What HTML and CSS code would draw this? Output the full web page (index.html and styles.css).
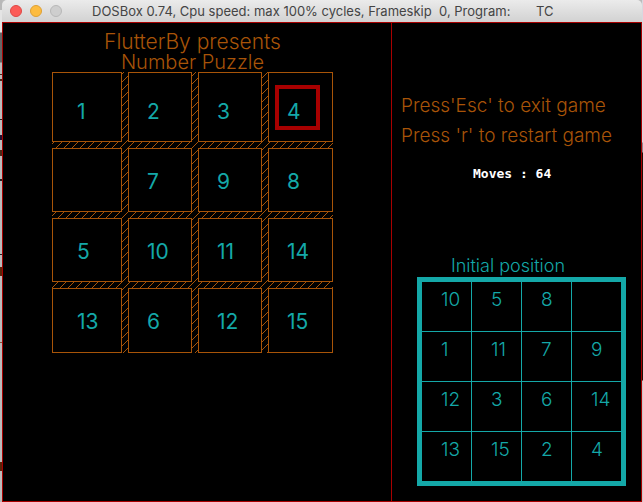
FILE: index.html
```html
<!DOCTYPE html>
<html lang="en">
<head>
<meta charset="utf-8">
<title>Number Puzzle</title>
<link rel="stylesheet" href="styles.css">
</head>
<body>
<div class="window">
  <header class="titlebar">
    <div class="lights">
      <button class="light close" aria-label="Close"></button>
      <button class="light minimize" aria-label="Minimize"></button>
      <button class="light zoom" aria-label="Zoom" disabled></button>
    </div>
    <span class="caption">DOSBox 0.74, Cpu speed: max 100% cycles, Frameskip  0, Program:       TC</span>
  </header>
  <main class="game">
    <section class="play">
      <header class="heading">
        <p class="presenter">FlutterBy presents</p>
        <h1 class="name">Number Puzzle</h1>
      </header>
      <div class="board">
        <div class="tile">1</div><div class="tile">2</div><div class="tile">3</div><div class="tile selected">4</div>
        <div class="tile"></div><div class="tile">7</div><div class="tile">9</div><div class="tile">8</div>
        <div class="tile">5</div><div class="tile">10</div><div class="tile">11</div><div class="tile">14</div>
        <div class="tile">13</div><div class="tile">6</div><div class="tile">12</div><div class="tile">15</div>
      </div>
    </section>
    <aside class="info">
      <p class="hint">Press'Esc' to exit game</p>
      <p class="hint">Press 'r' to restart game</p>
      <p class="moves">Moves : 64</p>
      <table class="initial">
        <caption>Initial position</caption>
        <tbody>
          <tr><td>10</td><td>5</td><td>8</td><td></td></tr>
          <tr><td>1</td><td>11</td><td>7</td><td>9</td></tr>
          <tr><td>12</td><td>3</td><td>6</td><td>14</td></tr>
          <tr><td>13</td><td>15</td><td>2</td><td>4</td></tr>
        </tbody>
      </table>
    </aside>
  </main>
</div>
</body>
</html>
```
FILE: styles.css
```css
:root {
  --orange: #a85408;
  --teal: #14a8a8;
  --red: #a80000;
}

*, *::after { box-sizing: border-box; }

body {
  margin: 0;
  font-family: Inter, "Liberation Sans", sans-serif;
  background:
    linear-gradient(#b8b8b8 10px, #e4e4e4 10px 32px, #666 33px 62px, #bbb 63px 74px, #4a2a18 74px 75px, #bbb 75px 79px, #4a2a18 79px 81px, #bbb 81px 119px, #222 119px 120px, #bbb 120px 135px, #201030 135px 140px, #bbb 140px 150px, #4a2a18 150px 156px, #bbb 156px 179px, #222 179px 181px, #bbb 181px 254px, #222 254px 255px, #bbb 255px 267px, #5a2408 267px 276px, #bbb 276px 342px, #86503a 342px 343px, #bbb 343px 462px, #5a2408 462px 471px, #bbb 471px) left / 2px 100% no-repeat,
    linear-gradient(#d8d8e0 142px, #888890 143px 152px, #181008 153px 380px, #c8c8cc 381px) right / 1px 100% no-repeat,
    #bbb;
}

.window {
  margin: 0 1px 0 2px;
  min-height: 100vh;
  display: flex;
  flex-direction: column;
}

.titlebar {
  display: flex;
  align-items: center;
  gap: 30px;
  height: 22px;
  padding-left: 8px;
  border-radius: 5px 5px 0 0;
  background: linear-gradient(#ebebeb, #d2d2d2);
}

.lights { display: flex; gap: 8px; }

.light {
  width: 12px;
  height: 12px;
  padding: 0;
  border: 1px solid;
  border-radius: 50%;
}
.close { background: #fc5b57; border-color: #df4744; }
.minimize { background: #fdbc40; border-color: #dea034; }
.zoom { background: #cecece; border-color: #b8b8b8; }

.caption {
  font-size: 13px;
  line-height: 22px;
  white-space: pre;
  color: #444;
}

.game {
  flex: 1;
  display: grid;
  grid-template-columns: 388fr 250fr;
  border: 1px solid var(--red);
  background: #000;
}

.play { padding: 9px 0 0 49px; }

.heading {
  width: 281px;
  text-align: center;
  color: var(--orange);
}
.presenter,
.name {
  margin: 0;
  font-size: 21px;
  font-weight: 300;
  line-height: 20px;
}
.name { font-size: 20px; }

.board {
  display: grid;
  grid-template-columns: 70px 64px 64px 65px;
  grid-template-rows: 70px 64px 64px 65px;
  gap: 6px;
  width: 281px;
  background: linear-gradient(135deg, transparent 46%, var(--orange) 46% 54%, transparent 54%) 0 0 / 8px 8px;
}

.tile {
  position: relative;
  padding: 19px 0 0 18px;
  border: 1px solid var(--orange);
  background: #000;
  font-size: 21px;
  line-height: 28px;
  color: var(--teal);
}
.tile:nth-child(4n + 1) { padding-left: 24px; }
.tile:nth-child(-n + 4) { padding-top: 25px; }

.selected::after {
  content: "";
  position: absolute;
  left: 6px;
  top: 12px;
  width: 45px;
  height: 45px;
  border: 4px solid var(--red);
}

.info {
  padding: 68px 0 0 9px;
  border-left: 1px solid var(--red);
}

.hint {
  margin: 0;
  font-size: 19px;
  font-weight: 300;
  line-height: 30px;
  color: var(--orange);
}

.moves {
  margin: 13px 0 0 72px;
  font: bold 13px/20px "DejaVu Sans Mono", monospace;
  color: #fff;
}

.initial {
  width: 209px;
  margin: 71px 0 0 16px;
  border: 5px solid var(--teal);
  border-collapse: separate;
  border-spacing: 0;
  table-layout: fixed;
  color: var(--teal);
  font-size: 19px;
}
.initial caption {
  padding-right: 27px;
  font-size: 18px;
  font-weight: 300;
  line-height: 22px;
}
.initial td {
  width: 50px;
  height: 50px;
  padding: 4px 0 0 19px;
  border: 0 solid var(--teal);
  border-width: 0 1px 1px 0;
  line-height: 28px;
  vertical-align: top;
  font-weight: 300;
}
.initial td:last-child { width: 49px; border-right-width: 0; }
.initial tr:last-child td { height: 49px; border-bottom-width: 0; }
```
